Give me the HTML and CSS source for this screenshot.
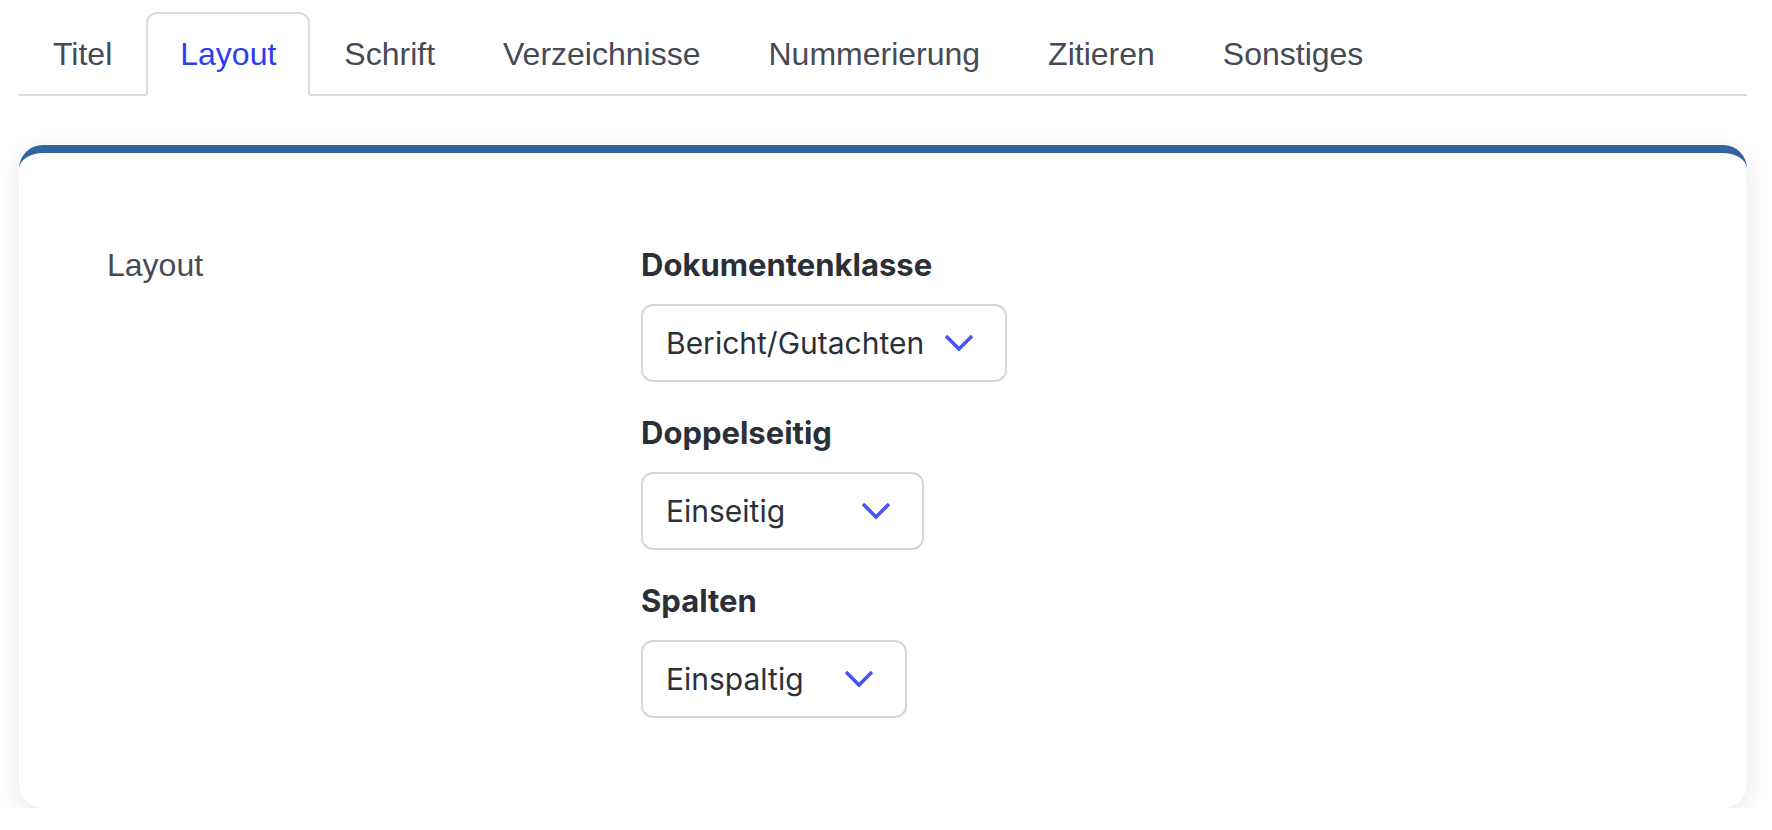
FILE: index.html
```html
<!DOCTYPE html>
<html lang="de">
<head>
    <meta charset="UTF-8">
    <meta name="viewport" content="width=device-width, initial-scale=1.0">
    <title>Einstellungen</title>
    <link rel="stylesheet" href="styles.css">
</head>
<body>
    <div class="page">
        <ul class="tabs">
            <li class="tab">Titel</li>
            <li class="tab active">Layout</li>
            <li class="tab">Schrift</li>
            <li class="tab">Verzeichnisse</li>
            <li class="tab">Nummerierung</li>
            <li class="tab">Zitieren</li>
            <li class="tab">Sonstiges</li>
        </ul>

        <div class="card">
            <div class="section">
                <div class="section-title">Layout</div>
                <div class="fields">
                    <div class="field">
                        <div class="field-label">Dokumentenklasse</div>
                        <div class="select select-class">
                            <span>Bericht/Gutachten</span>
                            <svg class="chevron" viewBox="0 0 30 18"><polyline points="2,2 15,15 28,2"/></svg>
                        </div>
                    </div>
                    <div class="field">
                        <div class="field-label">Doppelseitig</div>
                        <div class="select select-sides">
                            <span>Einseitig</span>
                            <svg class="chevron" viewBox="0 0 30 18"><polyline points="2,2 15,15 28,2"/></svg>
                        </div>
                    </div>
                    <div class="field">
                        <div class="field-label">Spalten</div>
                        <div class="select select-columns">
                            <span>Einspaltig</span>
                            <svg class="chevron" viewBox="0 0 30 18"><polyline points="2,2 15,15 28,2"/></svg>
                        </div>
                    </div>
                </div>
            </div>
        </div>
    </div>
</body>
</html>
```

FILE: styles.css
```css
body {
    margin: 0;
    background-color: #fff;
    font-family: "Liberation Sans", Arial, sans-serif;
    color: #454a55;
}
.page {
    padding: 12px 25px 0 19px;
}
.tabs {
    display: flex;
    list-style: none;
    margin: 0;
    padding: 0;
    border-bottom: 2px solid #d8dce1;
}
.tab {
    padding: 16px 32px;
    font-size: 32px;
    line-height: 48px;
    border: 2px solid transparent;
    border-radius: 11px 11px 0 0;
    margin-bottom: -2px;
    color: #454a55;
}
.tab.active {
    color: #2c3ef3;
    background-color: #fff;
    border-color: #d8dce1 #d8dce1 #fff;
}
.card {
    margin-top: 49px;
    padding: 88px 88px 90px;
    background-color: #fff;
    border-top: 8px solid #3264a0;
    border-radius: 24px;
    box-shadow: 0 6px 24px rgba(0, 0, 0, 0.1);
}
.section {
    display: grid;
    grid-template-columns: 534px 1fr;
}
.section-title {
    font-size: 32px;
    line-height: 48px;
    color: #474c57;
}
.field {
    margin-bottom: 27px;
}
.field:last-child {
    margin-bottom: 0;
}
.field-label {
    font-family: Inter, "Liberation Sans", sans-serif;
    font-size: 31px;
    font-weight: 700;
    line-height: 48px;
    color: #2b2f38;
    margin-bottom: 15px;
}
.select {
    display: flex;
    align-items: center;
    justify-content: space-between;
    box-sizing: border-box;
    height: 78px;
    padding: 0 31px 0 23px;
    border: 2px solid #d3d7dd;
    border-radius: 12px;
    font-family: Inter, "Liberation Sans", sans-serif;
    font-size: 30px;
    color: #2c303a;
}
.select-class {
    width: 366px;
}
.select-sides {
    width: 283px;
}
.select-columns {
    width: 266px;
}
.chevron {
    width: 30px;
    height: 18px;
    fill: none;
    stroke: #4653f5;
    stroke-width: 3.5;
}
```
